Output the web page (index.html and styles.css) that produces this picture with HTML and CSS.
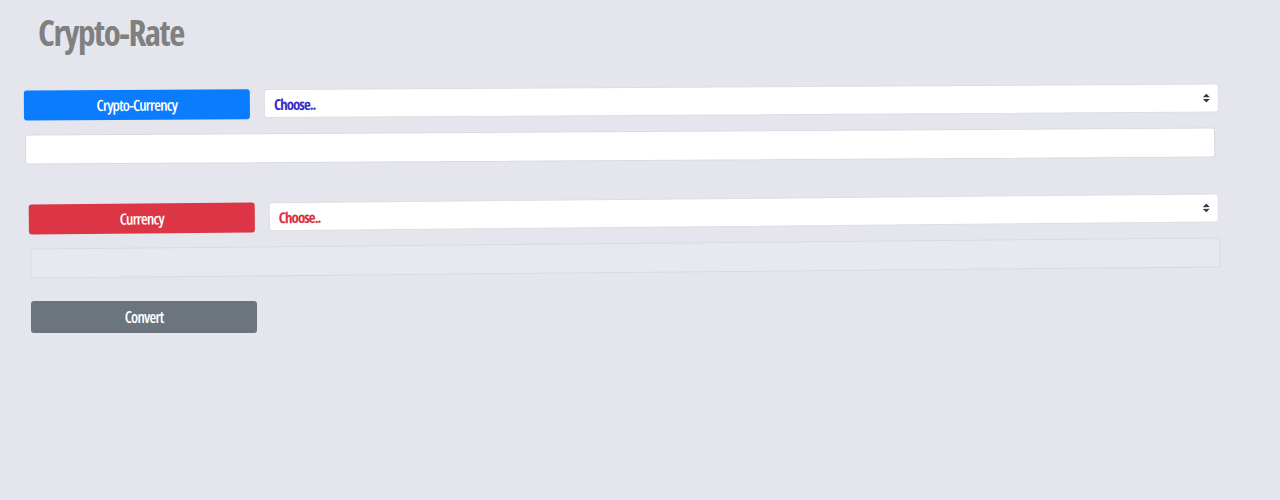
FILE: index.html
```html
<!DOCTYPE html>
<html lang="en">
<head>
<meta charset="utf-8">
<title>Crypto-Rate</title>
<link rel="stylesheet" href="styles.css">
</head>
<body>
<div class="page">
  <h1 class="title">Crypto-Rate</h1>

  <section class="block block-crypto">
    <div class="row">
      <button class="btn btn-primary" type="button">Crypto-Currency</button>
      <div class="select-wrap">
        <select class="select select-crypto">
          <option>Choose..</option>
        </select>
        <svg class="select-arrow" viewBox="0 0 4 5" width="7" height="9" aria-hidden="true"><path d="M2 0L0 2h4zm0 5L0 3h4z" fill="#343a40"/></svg>
      </div>
    </div>
    <input class="field" type="text">
  </section>

  <section class="block block-fiat">
    <div class="row">
      <button class="btn btn-danger" type="button">Currency</button>
      <div class="select-wrap">
        <select class="select select-fiat">
          <option>Choose..</option>
        </select>
        <svg class="select-arrow" viewBox="0 0 4 5" width="7" height="9" aria-hidden="true"><path d="M2 0L0 2h4zm0 5L0 3h4z" fill="#343a40"/></svg>
      </div>
    </div>
    <input class="field field-readonly" type="text" readonly>
  </section>

  <div class="actions">
    <button class="btn btn-secondary" type="button">Convert</button>
  </div>
</div>
</body>
</html>
```

FILE: styles.css
```css
html, body {
  margin: 0;
  padding: 0;
  background: #e5e6ed;
  height: 100%;
}

body {
  font-family: "Open Sans", "DejaVu Sans", sans-serif;
  font-stretch: 75%;
}

.page {
  padding: 0 0 0 24px;
  width: 1195px;
}

.title {
  margin: 0;
  padding: 11px 0 0 14px;
  height: 76px;
  box-sizing: border-box;
  font-size: 35px;
  font-weight: 700;
  letter-spacing: -1.5px;
  color: #808080;
  line-height: 44px;
}

.block {
  display: flex;
  flex-direction: column;
  gap: 14px;
  transform-origin: 50% 50%;
}

.block-crypto {
  margin-top: 11px;
  transform: rotate(-0.34deg);
}

.block-fiat {
  margin-top: 38px;
  padding-left: 5px;
  transform: rotate(-0.54deg);
}

.row {
  display: flex;
  align-items: flex-start;
  gap: 14px;
}

.btn {
  width: 226px;
  height: 30px;
  border: none;
  border-radius: 3px;
  color: #fff;
  font-family: inherit;
  font-stretch: 75%;
  font-size: 15.5px;
  font-weight: 600;
  letter-spacing: -0.8px;
  padding: 0;
  flex: none;
}

.btn-primary { background: #0b7cfd; }
.btn-danger { background: #dc3545; }
.btn-secondary { background: #6c757d; height: 32px; }

.select-wrap {
  position: relative;
  flex: 1;
}

.select {
  display: block;
  width: 100%;
  height: 29px;
  appearance: none;
  -webkit-appearance: none;
  background: #fff;
  border: 1px solid #dcdee4;
  border-radius: 3px;
  padding: 0 0 0 9px;
  font-family: inherit;
  font-stretch: 75%;
  font-size: 15px;
  font-weight: 700;
  letter-spacing: -1px;
}

.select-crypto { color: #3a2fc4; }
.select-fiat { color: #d93140; }

.select-arrow {
  position: absolute;
  right: 9px;
  top: 10px;
  pointer-events: none;
}

.field {
  display: block;
  width: 1190px;
  height: 30px;
  box-sizing: border-box;
  margin: 0 0 0 1px;
  background: #fff;
  border: 1px solid #d8dae1;
  border-radius: 3px;
}

.field-readonly {
  background: #e7e9ee;
}

.actions {
  margin-top: 28px;
  padding-left: 7px;
}
```
